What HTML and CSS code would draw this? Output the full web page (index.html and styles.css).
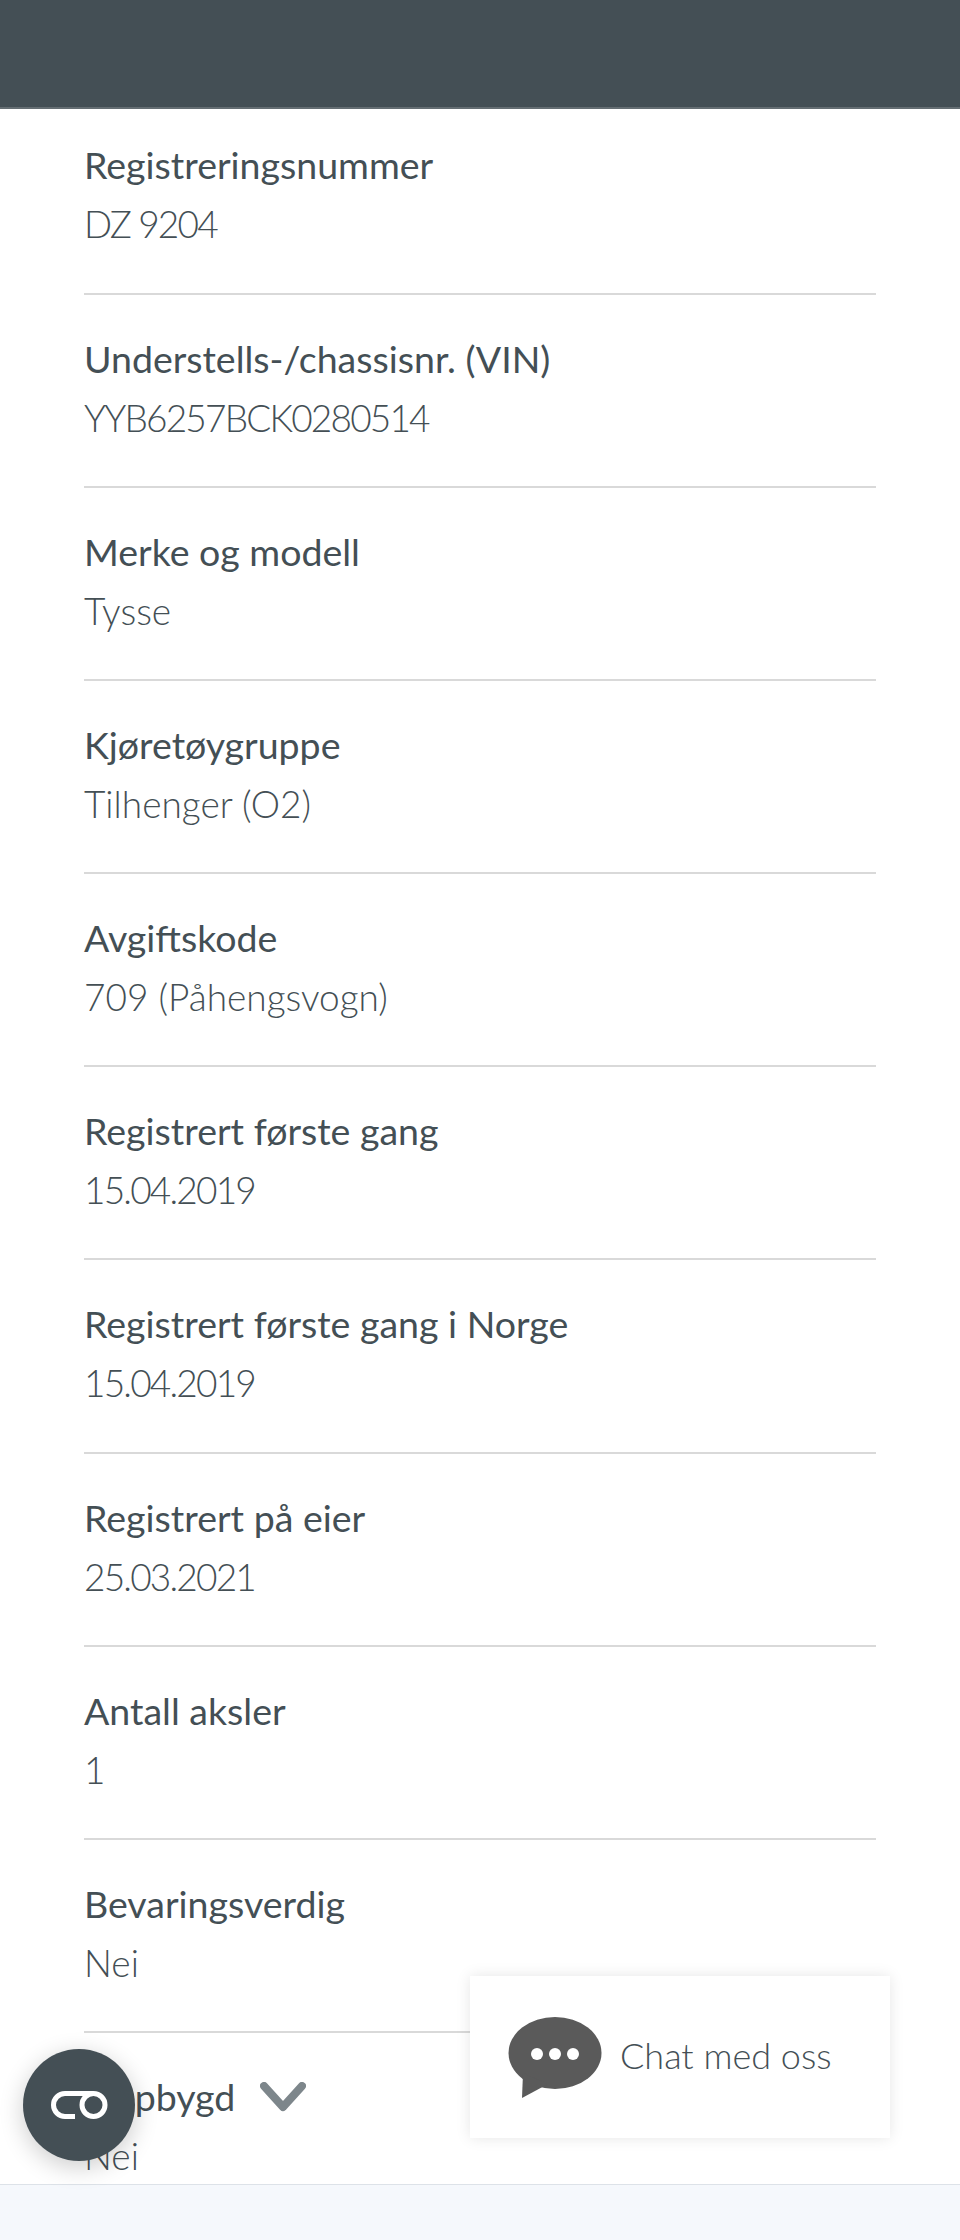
FILE: index.html
```html
<!DOCTYPE html>
<html>

<head>
    <meta charset="UTF-8">
    <title>Kjøretøyopplysninger</title>
    <link rel="stylesheet" href="styles.css">
</head>

<body>
    <header class="top-bar"></header>

    <main class="main-content">
        <dl class="details">
            <div class="row"><dt>Registreringsnummer</dt><dd class="digits">DZ 9204</dd></div>
            <div class="row"><dt>Understells-/chassisnr. (VIN)</dt><dd class="digits">YYB6257BCK0280514</dd></div>
            <div class="row"><dt>Merke og modell</dt><dd>Tysse</dd></div>
            <div class="row"><dt>Kjøretøygruppe</dt><dd>Tilhenger (O2)</dd></div>
            <div class="row"><dt>Avgiftskode</dt><dd>709 (Påhengsvogn)</dd></div>
            <div class="row"><dt>Registrert første gang</dt><dd class="digits">15.04.2019</dd></div>
            <div class="row"><dt>Registrert første gang i Norge</dt><dd class="digits">15.04.2019</dd></div>
            <div class="row"><dt>Registrert på eier</dt><dd class="digits">25.03.2021</dd></div>
            <div class="row"><dt>Antall aksler</dt><dd>1</dd></div>
            <div class="row"><dt>Bevaringsverdig</dt><dd>Nei</dd></div>
            <div class="row">
                <dt>Oppbygd
                    <svg class="chevron" width="46" height="30" viewBox="0 0 46 30">
                        <path d="M4 4 L23 25 L42 4" fill="none" stroke="#7d868b" stroke-width="8" stroke-linecap="round" stroke-linejoin="round" />
                    </svg>
                </dt>
                <dd>Nei</dd>
            </div>
        </dl>
    </main>

    <footer class="bottom-bar"></footer>

    <button class="cookie-button" aria-label="Personvern">
        <svg width="58" height="30" viewBox="0 0 58 30">
            <path d="M43 3.5 H15 A11.5 11.5 0 0 0 15 26.5 H25" fill="none" stroke="#fff" stroke-width="5" />
            <circle cx="43.5" cy="15" r="11.5" fill="none" stroke="#fff" stroke-width="5" />
        </svg>
    </button>

    <div class="chat-box">
        <svg class="chat-icon" width="94" height="82" viewBox="0 0 94 82">
            <ellipse cx="47" cy="36" rx="46.5" ry="36" fill="#5a5a5a" />
            <path d="M15 56 L14 81 L40 67 Z" fill="#5a5a5a" />
            <circle cx="29" cy="37" r="6" fill="#fff" />
            <circle cx="47" cy="37" r="6" fill="#fff" />
            <circle cx="65" cy="37" r="6" fill="#fff" />
        </svg>
        <span class="chat-label">Chat med oss</span>
    </div>
</body>

</html>
```

FILE: styles.css
```css
body {
    margin: 0;
    height: 2240px;
    display: flex;
    flex-direction: column;
    position: relative;
    overflow: hidden;
    font-family: Lato, "Open Sans", sans-serif;
    color: #444f55;
    background-color: #fff;
}

.top-bar {
    height: 107px;
    flex-shrink: 0;
    background-color: #444f55;
    border-bottom: 2px solid #656e73;
}

.main-content {
    flex: 1;
    overflow: hidden;
    padding: 0 84px;
}

.details {
    margin: 0;
}

.row {
    height: 191.1px;
    border-bottom: 2px solid #d9d9d9;
    display: flex;
    flex-direction: column;
}

.row:first-child {
    height: 184px;
}

.row:last-child {
    border-bottom: none;
}

.row dt {
    margin-top: 42px;
    font-size: 37.5px;
    line-height: 44px;
    font-weight: 400;
    display: flex;
    align-items: center;
    gap: 25px;
}

.row:first-child dt {
    margin-top: 34px;
}

.row dd {
    margin: 15px 0 0;
    font-size: 37px;
    line-height: 44px;
    font-weight: 300;
}

/* los numeros de Lato son anchos */
.row dd.digits {
    letter-spacing: -1.8px;
}

.bottom-bar {
    height: 55px;
    flex-shrink: 0;
    background-color: #f5f8fc;
    border-top: 1px solid #dde2e8;
}

.cookie-button {
    position: absolute;
    left: 23px;
    top: 2049px;
    width: 112px;
    height: 112px;
    padding: 0;
    border: none;
    border-radius: 50%;
    background-color: #444f55;
    box-shadow: 0 6px 24px rgba(0, 0, 0, 0.2);
    display: flex;
    align-items: center;
    justify-content: center;
}

.chat-box {
    position: absolute;
    left: 470px;
    top: 1976px;
    width: 420px;
    height: 162px;
    box-sizing: border-box;
    padding-left: 38px;
    display: flex;
    align-items: center;
    gap: 18px;
    background-color: #fff;
    box-shadow: 0 0 14px rgba(0, 0, 0, 0.1);
    font-size: 36px;
    font-weight: 300;
}

.chat-icon {
    margin-top: 2px;
}

.chat-label {
    margin-bottom: 5px;
}
```
